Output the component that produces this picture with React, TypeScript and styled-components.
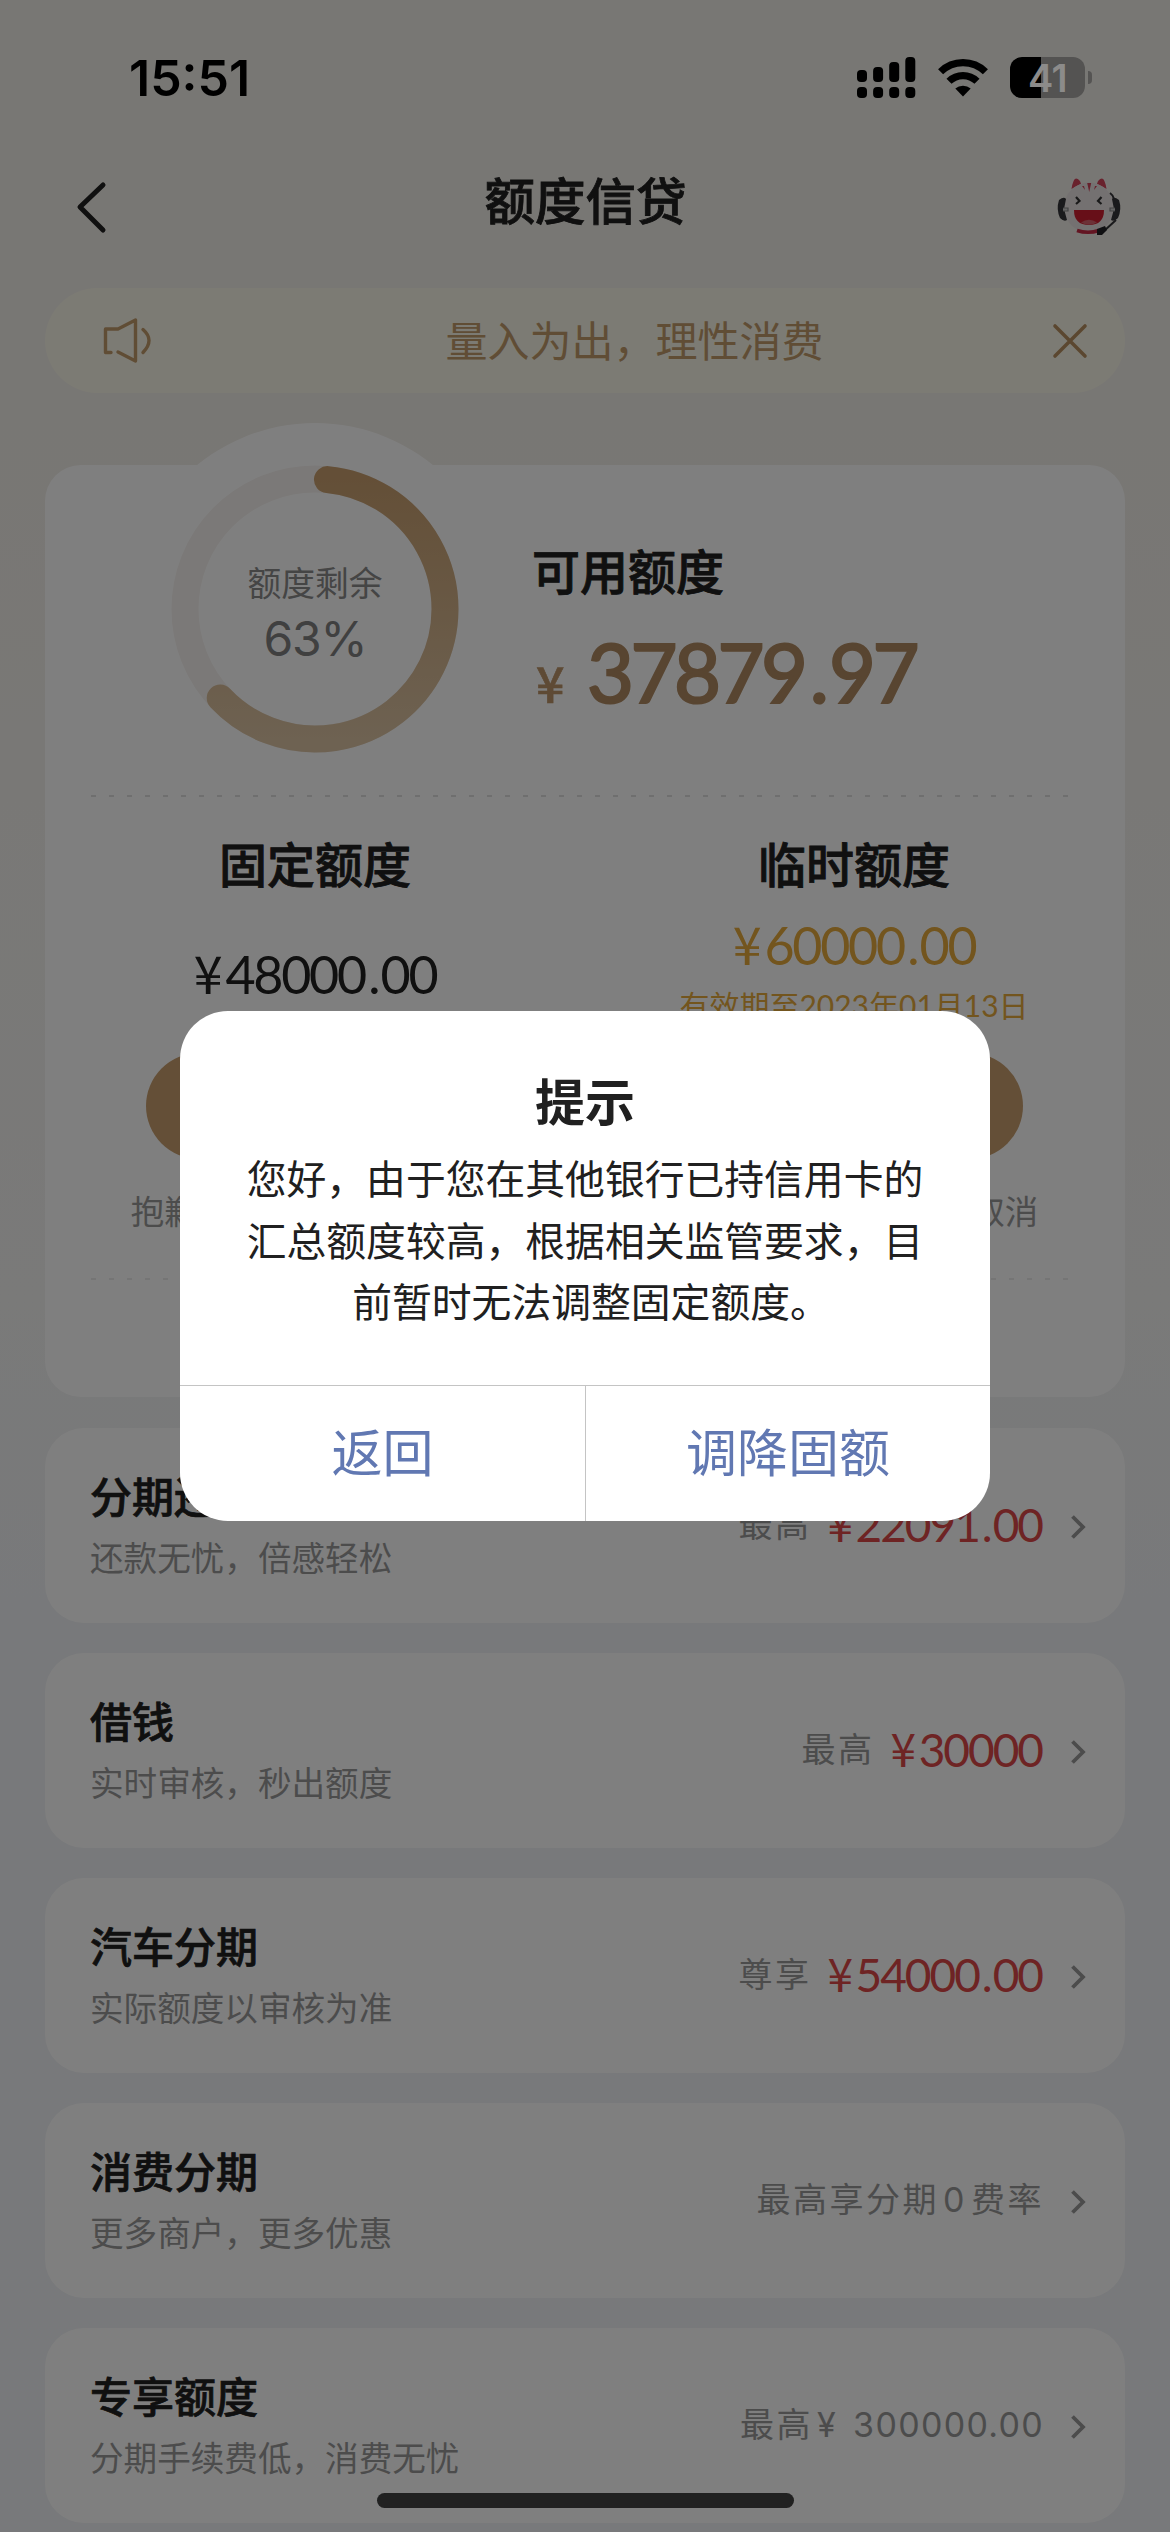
import React from 'react';
import styled, { createGlobalStyle } from 'styled-components';

const cjk = '"Noto Sans CJK SC", sans-serif';
const numeric = `Lato, ${cjk}`;
const system = `Inter, ${cjk}`;

const GlobalStyle = createGlobalStyle`
  * { box-sizing: border-box; }
  body { margin: 0; font-family: ${cjk}; color: #202020; }
`;

const Screen = styled.div`
  position: relative;
  width: 1170px;
  height: 2532px;
  overflow: hidden;
  display: flex;
  flex-direction: column;
  background: linear-gradient(180deg, #f1eee8 0, #f1eee8 420px, #f3f1ed 800px, #f4f4f3 1300px, #f1f3f6 1600px, #f1f3f6 100%);
`;

const StatusBar = styled.header`
  position: relative;
  z-index: 2;
  flex: none;
  height: 150px;
  padding: 48px 78px 0 129px;
  display: flex;
  justify-content: space-between;
  align-items: flex-start;
  color: #000;
`;

const Clock = styled.time`
  font: 600 50px/60px ${system};
  letter-spacing: 0;
`;

const StatusIcons = styled.div`
  display: flex;
  align-items: center;
  gap: 22px;
  padding-top: 9px;
  svg { display: block; }
`;

const Battery = styled.div`
  display: flex;
  align-items: center;
  gap: 3px;
`;

const BatteryBody = styled.div`
  width: 75px;
  height: 41px;
  border-radius: 12px;
  background: linear-gradient(90deg, #000 31px, #545352 31px);
  color: #8c8b8a;
  text-align: center;
  font: 600 38px/42px ${system};
  letter-spacing: -0.5px;
`;

const BatteryTip = styled.div`
  width: 4px;
  height: 13px;
  border-radius: 0 6px 6px 0;
  background: #555453;
`;

const NavBar = styled.nav`
  flex: none;
  height: 138px;
  padding: 20px 48px 0 74px;
  display: grid;
  grid-template-columns: 70px 1fr 66px;
  justify-items: center;
  align-items: start;
  > svg { margin-top: 7px; }
  > svg:first-child { justify-self: start; margin-top: 10px; }
`;

const NavTitle = styled.h1`
  margin: 0;
  padding-right: 29px;
  font-size: 50.5px;
  line-height: 56px;
  font-weight: 500;
  -webkit-text-stroke: 0.8px currentColor;
`;

const Notice = styled.section`
  flex: none;
  margin: 0 45px;
  height: 105px;
  padding: 0 36px 0 57px;
  border-radius: 53px;
  background: #f9f7e8;
  color: #c19a6b;
  display: flex;
  align-items: center;
  justify-content: space-between;
`;

const NoticeText = styled.p`
  margin: 0 0 3px 64px;
  font-size: 42px;
  line-height: 60px;
`;

const Card = styled.section`
  flex: none;
  margin: 72px 45px 0;
  height: 932px;
  padding: 0 43px;
  border-radius: 36px;
  background: #fff;
  display: flex;
  flex-direction: column;
`;

const Summary = styled.div`
  height: 330px;
  display: flex;
  padding-left: 41px;
`;

const Ring = styled.div`
  flex: none;
  width: 372px;
  height: 372px;
  margin-top: -42px;
  display: grid;
  > * { grid-area: 1 / 1; }
`;

const RingText = styled.div`
  padding-top: 134px;
  display: flex;
  flex-direction: column;
  align-items: center;
  gap: 3px;
  color: #8a8a8a;
`;

const RingLabel = styled.span`
  font-size: 33.75px;
  line-height: 50px;
`;

const RingValue = styled.span`
  font: 400 48px/58px ${system};
  color: #808080;
  letter-spacing: -1.2px;
`;

const Available = styled.div`
  padding: 76px 0 0 31px;
`;

const Heading = styled.h2`
  margin: 0;
  font-size: 48px;
  line-height: 56px;
  font-weight: 500;
  white-space: nowrap;
  -webkit-text-stroke: 0.8px currentColor;
`;

const BigAmount = styled.div`
  display: flex;
  align-items: baseline;
  padding: 26px 0 0 4px;
  color: #b08a62;
  font: 400 81px/98px ${numeric};
  letter-spacing: -3.5px;
  -webkit-text-stroke: 2.2px currentColor;
`;

const BigYen = styled.span`
  width: 51px;
  font: 500 50px/60px ${cjk};
  color: #bd956a;
  -webkit-text-stroke: 0.6px currentColor;
`;

const Point = styled.span`
  margin: 0 0.045em 0 0.065em;
`;

const Dashes = styled.div<{ $faint?: boolean }>`
  flex: none;
  height: 2px;
  margin: 0 12px 0 3px;
  background: repeating-linear-gradient(90deg, ${p => (p.$faint ? '#ebebeb' : '#dedede')} 0 5px, transparent 5px 18px);
`;

const Limits = styled.div`
  height: 481px;
  display: grid;
  grid-template-columns: 454px 456px;
  justify-content: space-between;
`;

const Limit = styled.div`
  display: flex;
  flex-direction: column;
  align-items: center;
  padding-top: 37px;
`;

const LimitAmounts = styled.div`
  height: 163px;
  padding-top: 3px;
  display: flex;
  flex-direction: column;
  align-items: center;
  justify-content: center;
`;

const Money = styled.div<{ $size: number; $color: string }>`
  display: flex;
  align-items: baseline;
  font: 400 ${p => p.$size}px/${p => Math.round(p.$size * 1.2)}px ${numeric};
  letter-spacing: ${p => -p.$size * 0.044}px;
  color: ${p => p.$color};
  white-space: nowrap;
`;

const Yen = styled.span`
  margin-right: 0.1em;
  font-family: ${cjk};
`;

const Validity = styled.span`
  font: 400 30px/58px ${numeric};
  color: #e6aa3c;
  white-space: nowrap;
`;

const PillButton = styled.button`
  width: 338px;
  height: 106px;
  border: 0;
  border-radius: 53px;
  background: #c89f6f;
  color: #fff;
  font: 400 42px ${cjk};
`;

const LimitHint = styled.p`
  margin: 26px 0 0;
  font-size: 33.5px;
  line-height: 50px;
  color: #999;
  white-space: nowrap;
`;

const ProductList = styled.div`
  display: flex;
  flex-direction: column;
  gap: 30px;
  padding: 30.5px 45px 0;
`;

const Product = styled.article`
  flex: none;
  height: 195px;
  padding: 0 39px 0 45px;
  border-radius: 39px;
  background: #fff;
  display: flex;
  justify-content: space-between;
`;

const ProductName = styled.h3`
  margin: 42px 0 0;
  font-size: 42px;
  line-height: 50px;
  font-weight: 500;
  -webkit-text-stroke: 0.7px currentColor;
`;

const ProductNote = styled.p`
  margin: 14px 0 0;
  font-size: 33.6px;
  line-height: 46px;
  color: #999;
`;

const ProductOffer = styled.div`
  height: 199px;
  display: flex;
  align-items: center;
  ${Money} { margin-top: -7px; }
`;

const OfferLabel = styled.span<{ $gap?: number }>`
  font: 400 34px/52px ${system};
  letter-spacing: 2.5px;
  color: #999;
  margin-right: ${p => p.$gap ?? -2}px;
  margin-top: -4px;
`;

const Figure = styled.span`
  margin: 0 4px;
`;

const OfferNumber = styled.span`
  letter-spacing: 1.3px;
`;

const Arrow = styled.svg`
  display: block;
  margin-left: 28px;
`;

const Overlay = styled.div`
  position: absolute;
  inset: 0;
  z-index: 1;
  background: rgba(0, 0, 0, 0.5);
  display: flex;
  justify-content: center;
  align-items: center;
`;

const Dialog = styled.div`
  width: 810px;
  height: 510px;
  border-radius: 48px;
  background: #fff;
  overflow: hidden;
  display: flex;
  flex-direction: column;
  text-align: center;
`;

const DialogTitle = styled.h2`
  margin: 58px 0 0;
  font-size: 50px;
  line-height: 60px;
  font-weight: 700;
`;

const DialogText = styled.p`
  flex: 1;
  margin: 17px 60px 0;
  font-size: 39.8px;
  line-height: 61.5px;
`;

const LastLine = styled.span`
  display: block;
  padding-left: 12px;
`;

const DialogActions = styled.div`
  height: 136px;
  display: grid;
  grid-template-columns: 1fr 1fr;
  border-top: 1px solid #c4c4c4;
`;

const DialogButton = styled.button`
  border: 0;
  background: none;
  padding: 0 0 7px;
  color: #6178b2;
  font: 400 51px/60px ${cjk};
  & + & { border-left: 1px solid #c4c4c4; }
`;

const HomeIndicator = styled.div`
  position: absolute;
  z-index: 2;
  left: 377px;
  bottom: 24px;
  width: 417px;
  height: 15px;
  border-radius: 8px;
  background: #212121;
`;

const Digits = ({ value }: { value: string }) => {
  const [whole, cents] = value.split('.');
  return (
    <span>
      {whole}
      {cents && <><Point>.</Point>{cents}</>}
    </span>
  );
};

const SignalIcon = () => (
  <svg width="59" height="41" viewBox="0 0 59 41">
    {[13, 10, 5, 0].map((y, i) => (
      <g key={y}>
        <rect x={i * 16.1} y={y} width="10" height={25 - y} rx="4" />
        <rect x={i * 16.1} y="30" width="10" height="11" rx="4" />
      </g>
    ))}
  </svg>
);

const WifiIcon = () => (
  <svg width="50" height="38" viewBox="0 0 50 38" fill="none" stroke="#000" strokeWidth="7.2">
    <path d="M2.6 12.8 A32 32 0 0 1 47.4 12.8" />
    <path d="M11 22.3 A20 20 0 0 1 39 22.3" />
    <path d="M25 37.5 L17.3 29.6 A11.5 11.5 0 0 1 32.7 29.6 Z" fill="#000" stroke="none" />
  </svg>
);

const BackIcon = () => (
  <svg width="36" height="56" viewBox="0 0 36 56" fill="none" stroke="#202020" strokeWidth="5" strokeLinecap="round" strokeLinejoin="round">
    <path d="M29 5 L6 27 L29 50" />
  </svg>
);

const CatIcon = () => (
  <svg width="66" height="58" viewBox="0 0 66 58">
    <path d="M13 19 L15 6 Q16 0 21 2 L28 8 Z M53 19 L51 6 Q50 0 45 2 L38 8 Z" fill="#f4eeee" />
    <path d="M15.500 12 Q17 2 20 1.500 Q24 2 25 7 Q20 9 15.500 12Z M50.500 12 Q49 2 46 1.500 Q42 2 41 7 Q46 9 50.500 12Z" fill="#d2455b" />
    <ellipse cx="33" cy="30.500" rx="25" ry="25" fill="#e9e3e3" />
    <path d="M31.200 6 h4 l-2 9z M26 9 l2 0 1 4z M41 9 l-2 0 -1 4z" fill="#cf4258" />
    <path d="M20 20 l3.500 4 -3.500 3 M45.500 20 l-3.500 4 3.500 3" fill="none" stroke="#333" strokeWidth="2.2" />
    <path d="M18 33 H48 Q48 48 33 48 Q18 48 18 33Z" fill="#cf1f31" />
    <path d="M25 45.500 Q33 40 41 45.500 Q33 50 25 45.500Z" fill="#d8636f" />
    <path d="M21 53.500 Q32 57 43 53.500" fill="none" stroke="#c72a44" strokeWidth="3.6" />
    <path d="M3 23 Q8 19 10 22 L8 32 L11 43 Q8 45 4 41 Q0 32 3 23Z M63 23 Q58 19 56 22 L58 32 L55 43 Q58 45 62 41 Q66 32 63 23Z" fill="#343438" />
    <path d="M7 31 H12 V34 H7 M59 31 H54 V34 H59" fill="#ccc" stroke="#888" strokeWidth="1.2" />
    <path d="M58 22 Q57 18 54 16 M60 43 L48 54" fill="none" stroke="#343438" strokeWidth="2" />
    <path d="M41 52 L49 49 L51 53 L46 58 L41 58Z" fill="#202024" />
  </svg>
);

const SpeakerIcon = () => (
  <svg width="52" height="48" viewBox="0 0 52 48" fill="none" stroke="#c19a6b" strokeWidth="3.4" strokeLinecap="round" strokeLinejoin="round">
    <path d="M9 35.500 H3.500 V12 H16 L33.500 3 V44 L16 35" />
    <path d="M41 12.500 Q53 23 41 35.500" />
  </svg>
);

const CloseIcon = () => (
  <svg width="38" height="38" viewBox="0 0 38 38" fill="none" stroke="#b78f60" strokeWidth="3.6" strokeLinecap="round">
    <path d="M4 4 L34 34 M34 4 L4 34" />
  </svg>
);

const RingChart = ({ share }: { share: number }) => {
  const at = (deg: number) => {
    const a = (deg * Math.PI) / 180;
    return `${186 + 130 * Math.sin(a)} ${186 - 130 * Math.cos(a)}`;
  };
  return (
    <svg width="372" height="372" viewBox="0 0 372 372" fill="none">
      <defs>
        <linearGradient id="arc" x1="0" y1="0" x2="0" y2="1">
          <stop offset="0" stopColor="#c89f6f" />
          <stop offset="1" stopColor="#dcc4a4" />
        </linearGradient>
      </defs>
      <circle cx="186" cy="186" r="186" fill="#fff" />
      <circle cx="186" cy="186" r="130" stroke="#f7f3f0" strokeWidth="27" />
      <path d={`M${at(5.5)} A130 130 0 1 1 ${at(share * 3.6)}`} stroke="url(#arc)" strokeWidth="27" strokeLinecap="round" />
    </svg>
  );
};

const products = [
  { name: '分期还款', note: '还款无忧，倍感轻松', label: '最高', amount: '22091.00' },
  { name: '借钱', note: '实时审核，秒出额度', label: '最高', amount: '30000' },
  { name: '汽车分期', note: '实际额度以审核为准', label: '尊享', amount: '54000.00' },
  { name: '消费分期', note: '更多商户，更多优惠', label: <>最高享分期<Figure>0</Figure>费率</> },
  { name: '专享额度', note: '分期手续费低，消费无忧', label: <>最高<Figure>¥</Figure><OfferNumber> 300000.00</OfferNumber></> },
];

export default function App() {
  return (
    <Screen>
      <GlobalStyle />
      <StatusBar>
        <Clock>15:51</Clock>
        <StatusIcons>
          <SignalIcon />
          <WifiIcon />
          <Battery>
            <BatteryBody>41</BatteryBody>
            <BatteryTip />
          </Battery>
        </StatusIcons>
      </StatusBar>
      <NavBar>
        <BackIcon />
        <NavTitle>额度信贷</NavTitle>
        <CatIcon />
      </NavBar>
      <Notice>
        <SpeakerIcon />
        <NoticeText>量入为出，理性消费</NoticeText>
        <CloseIcon />
      </Notice>
      <Card>
        <Summary>
          <Ring>
            <RingChart share={63} />
            <RingText>
              <RingLabel>额度剩余</RingLabel>
              <RingValue>63%</RingValue>
            </RingText>
          </Ring>
          <Available>
            <Heading>可用额度</Heading>
            <BigAmount><BigYen>¥</BigYen><Digits value="37879.97" /></BigAmount>
          </Available>
        </Summary>
        <Dashes />
        <Limits>
          <Limit>
            <Heading>固定额度</Heading>
            <LimitAmounts>
              <Money $size={52} $color="#202020"><Yen>¥</Yen><Digits value="48000.00" /></Money>
            </LimitAmounts>
            <PillButton>调整固额</PillButton>
            <LimitHint>抱歉您暂时不可调整额度</LimitHint>
          </Limit>
          <Limit>
            <Heading>临时额度</Heading>
            <LimitAmounts>
              <Money $size={52} $color="#e6aa3c"><Yen>¥</Yen><Digits value="60000.00" /></Money>
              <Validity>有效期至2023年01月13日</Validity>
            </LimitAmounts>
            <PillButton>取消临额</PillButton>
            <LimitHint>您的临时额度可随时取消</LimitHint>
          </Limit>
        </Limits>
        <Dashes $faint />
      </Card>
      <ProductList>
        {products.map(p => (
          <Product key={p.name}>
            <div>
              <ProductName>{p.name}</ProductName>
              <ProductNote>{p.note}</ProductNote>
            </div>
            <ProductOffer>
              <OfferLabel $gap={p.amount ? 16 : undefined}>{p.label}</OfferLabel>
              {p.amount && <Money $size={46} $color="#dd4848"><Yen>¥</Yen><Digits value={p.amount} /></Money>}
              <Arrow width="16" height="26" viewBox="0 0 16 26" fill="none" stroke="#999" strokeWidth="3.8">
                <path d="M2.500 2.500 L13 13 L2.500 23.500" />
              </Arrow>
            </ProductOffer>
          </Product>
        ))}
      </ProductList>
      <Overlay>
        <Dialog>
          <DialogTitle>提示</DialogTitle>
          <DialogText>
            您好，由于您在其他银行已持信用卡的汇总额度较高，根据相关监管要求，目
            <LastLine>前暂时无法调整固定额度。</LastLine>
          </DialogText>
          <DialogActions>
            <DialogButton>返回</DialogButton>
            <DialogButton>调降固额</DialogButton>
          </DialogActions>
        </Dialog>
      </Overlay>
      <HomeIndicator />
    </Screen>
  );
}
